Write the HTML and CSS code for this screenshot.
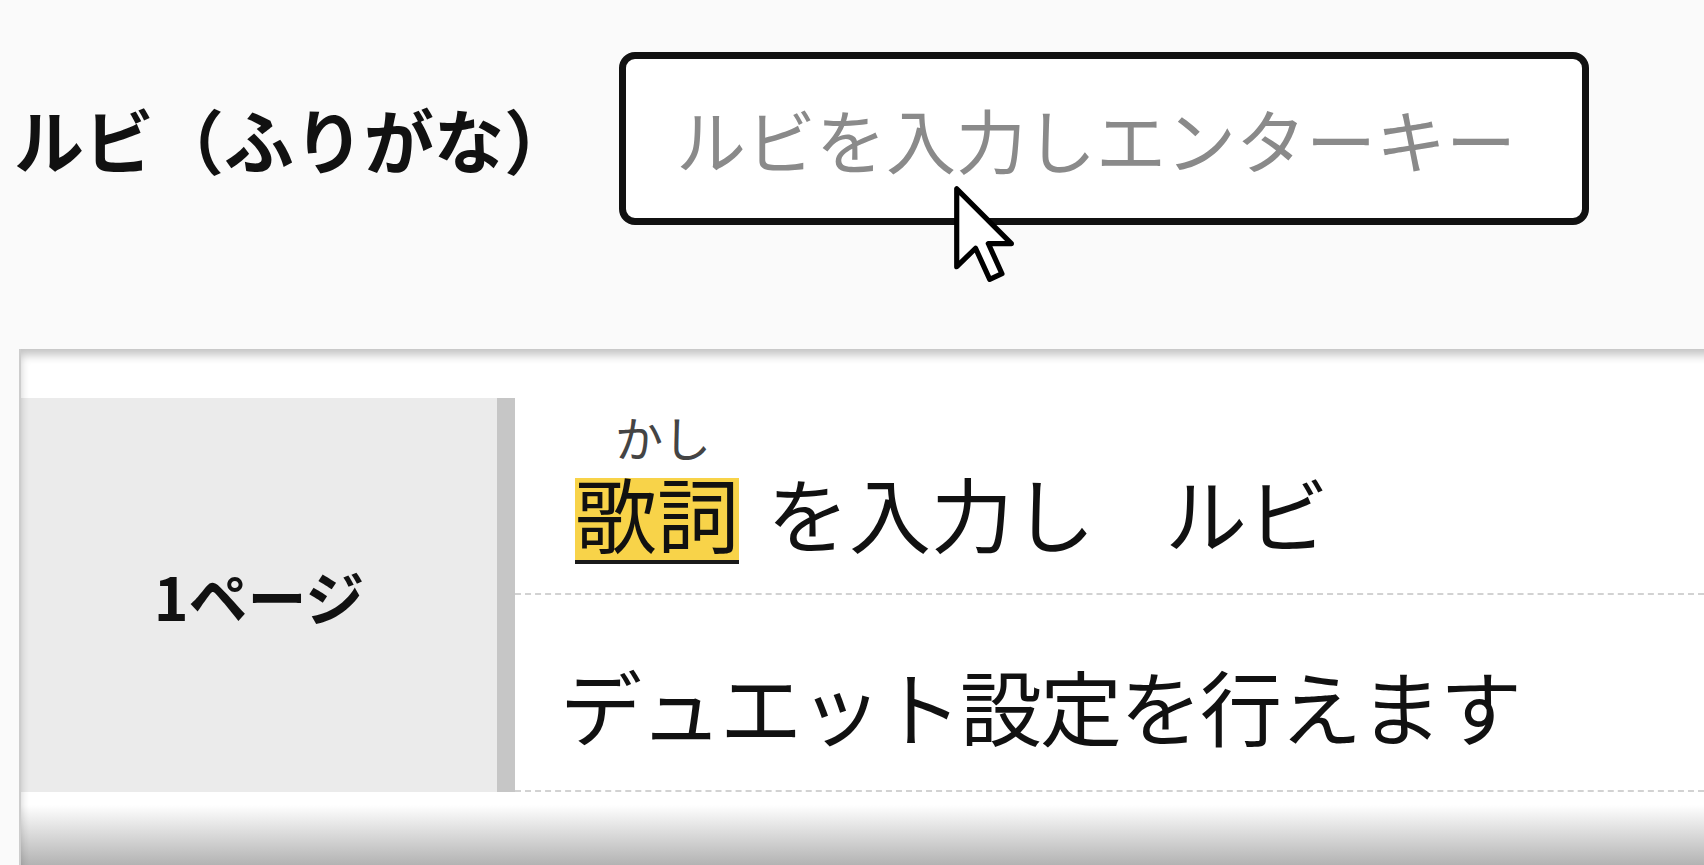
FILE: index.html
```html
<!DOCTYPE html>
<html lang="ja">
<head>
  <meta charset="UTF-8">
  <meta name="viewport" content="width=device-width, initial-scale=1.0">
  <title>ルビ入力</title>
  <link rel="stylesheet" href="styles.css">
</head>
<body>
  <div class="ruby-field">
    <label class="ruby-label" for="rubyInput">ルビ（ふりがな）</label>
    <input type="text" id="rubyInput" class="ruby-input" placeholder="ルビを入力しエンターキー" autocomplete="off">
  </div>

  <div class="pages">
    <div class="page">
      <div class="page-title">1ページ</div>
      <div class="page-lines">
        <div class="line first">
          <span class="line-text"><ruby class="kashi"><span class="marked">歌詞</span><rt><span class="yomi">かし</span></rt></ruby>を入力し<span class="word">ルビ</span></span>
        </div>
        <div class="line">
          <span class="line-text tight">デュエット設定を行えます</span>
        </div>
      </div>
    </div>
  </div>

  <!-- マウスカーソル -->
  <svg class="pointer" viewBox="0 0 14 22" width="66" height="104" aria-hidden="true">
    <path d="M1 1 L1 17.5 L5 13.6 L8 20.2 L10.6 19 L7.7 12.6 L12.6 12.6 Z"
          fill="#fff" stroke="#000" stroke-width="1.1" stroke-linejoin="round"/>
  </svg>
</body>
</html>
```

FILE: styles.css
```css
:root {
  --text-color: #111;
  --page-bg: #fafafa;
  --cell-bg: #ebebeb;
  --bar-color: #c6c6c6;
  --dash-color: #d2d2d2;
  --mark-color: #f8d349;
}

* {
  box-sizing: border-box;
  margin: 0;
  padding: 0;
}

body {
  font-family: "Noto Sans CJK JP", "Noto Sans", sans-serif;
  color: var(--text-color);
  background-color: var(--page-bg);
  height: 865px;
  overflow: hidden;
  position: relative;
}

.ruby-field {
  display: flex;
  align-items: center;
  padding: 52px 0 0 14px;
}

.ruby-label {
  font-size: 70px;
  font-weight: 700;
  line-height: 1;
  text-spacing-trim: space-all;
}

.ruby-input {
  width: 970px;
  height: 173px;
  margin-left: 45px;
  padding: 0 0 0 50px;
  border: 7px solid #111;
  border-radius: 16px;
  background: #fff;
  font-family: inherit;
  font-size: 70px;
  color: var(--text-color);
  outline: none;
}

.ruby-input::placeholder {
  color: #8a8a8a;
}

.pages {
  position: relative;
  margin: 124px 0 0 19px;
  height: 516px;
  padding-top: 49px;
  border-left: 2px solid #cdcdcd;
  background: linear-gradient(to bottom, #fff calc(100% - 60px), #b3b3b3);
}

/* 上と左の内側の影 */
.pages::before {
  content: "";
  position: absolute;
  inset: 0;
  box-shadow: inset 5px 12px 10px -6px rgba(0, 0, 0, 0.24);
  pointer-events: none;
  z-index: 2;
}

.page {
  display: flex;
}

.page-title {
  width: 494px;
  flex-shrink: 0;
  display: flex;
  align-items: center;
  justify-content: center;
  background: var(--cell-bg);
  border-right: 18px solid var(--bar-color);
  font-size: 59px;
  font-weight: 700;
  line-height: 1;
}

.page-lines {
  flex: 1;
}

.line {
  height: 197px;
  display: flex;
  align-items: flex-end;
  padding: 0 0 29px 45px;
  border-bottom: 2px dashed var(--dash-color);
  font-size: 82px;
  line-height: 112px;
}

.line.first {
  padding-bottom: 25px;
}

.line-text {
  white-space: nowrap;
}

.line-text.tight {
  letter-spacing: -2px;
}

.kashi {
  margin: 0 28px 0 15px;
  ruby-align: center;
}

.kashi rt {
  font-size: 48px;
  line-height: 24px;
  color: #444;
  text-align: center;
  ruby-align: center;
}

/* ルビを漢字に少し寄せる */
.yomi {
  position: relative;
  top: 11px;
  left: 6px;
}

.marked {
  display: inline-block;
  line-height: 68px;
  padding-bottom: 14px;
  background: var(--mark-color);
  border-bottom: 4px solid #1a1a1a;
}

.word {
  margin-left: 70px;
}

.pointer {
  position: absolute;
  left: 952px;
  top: 184px;
  z-index: 5;
}
```
